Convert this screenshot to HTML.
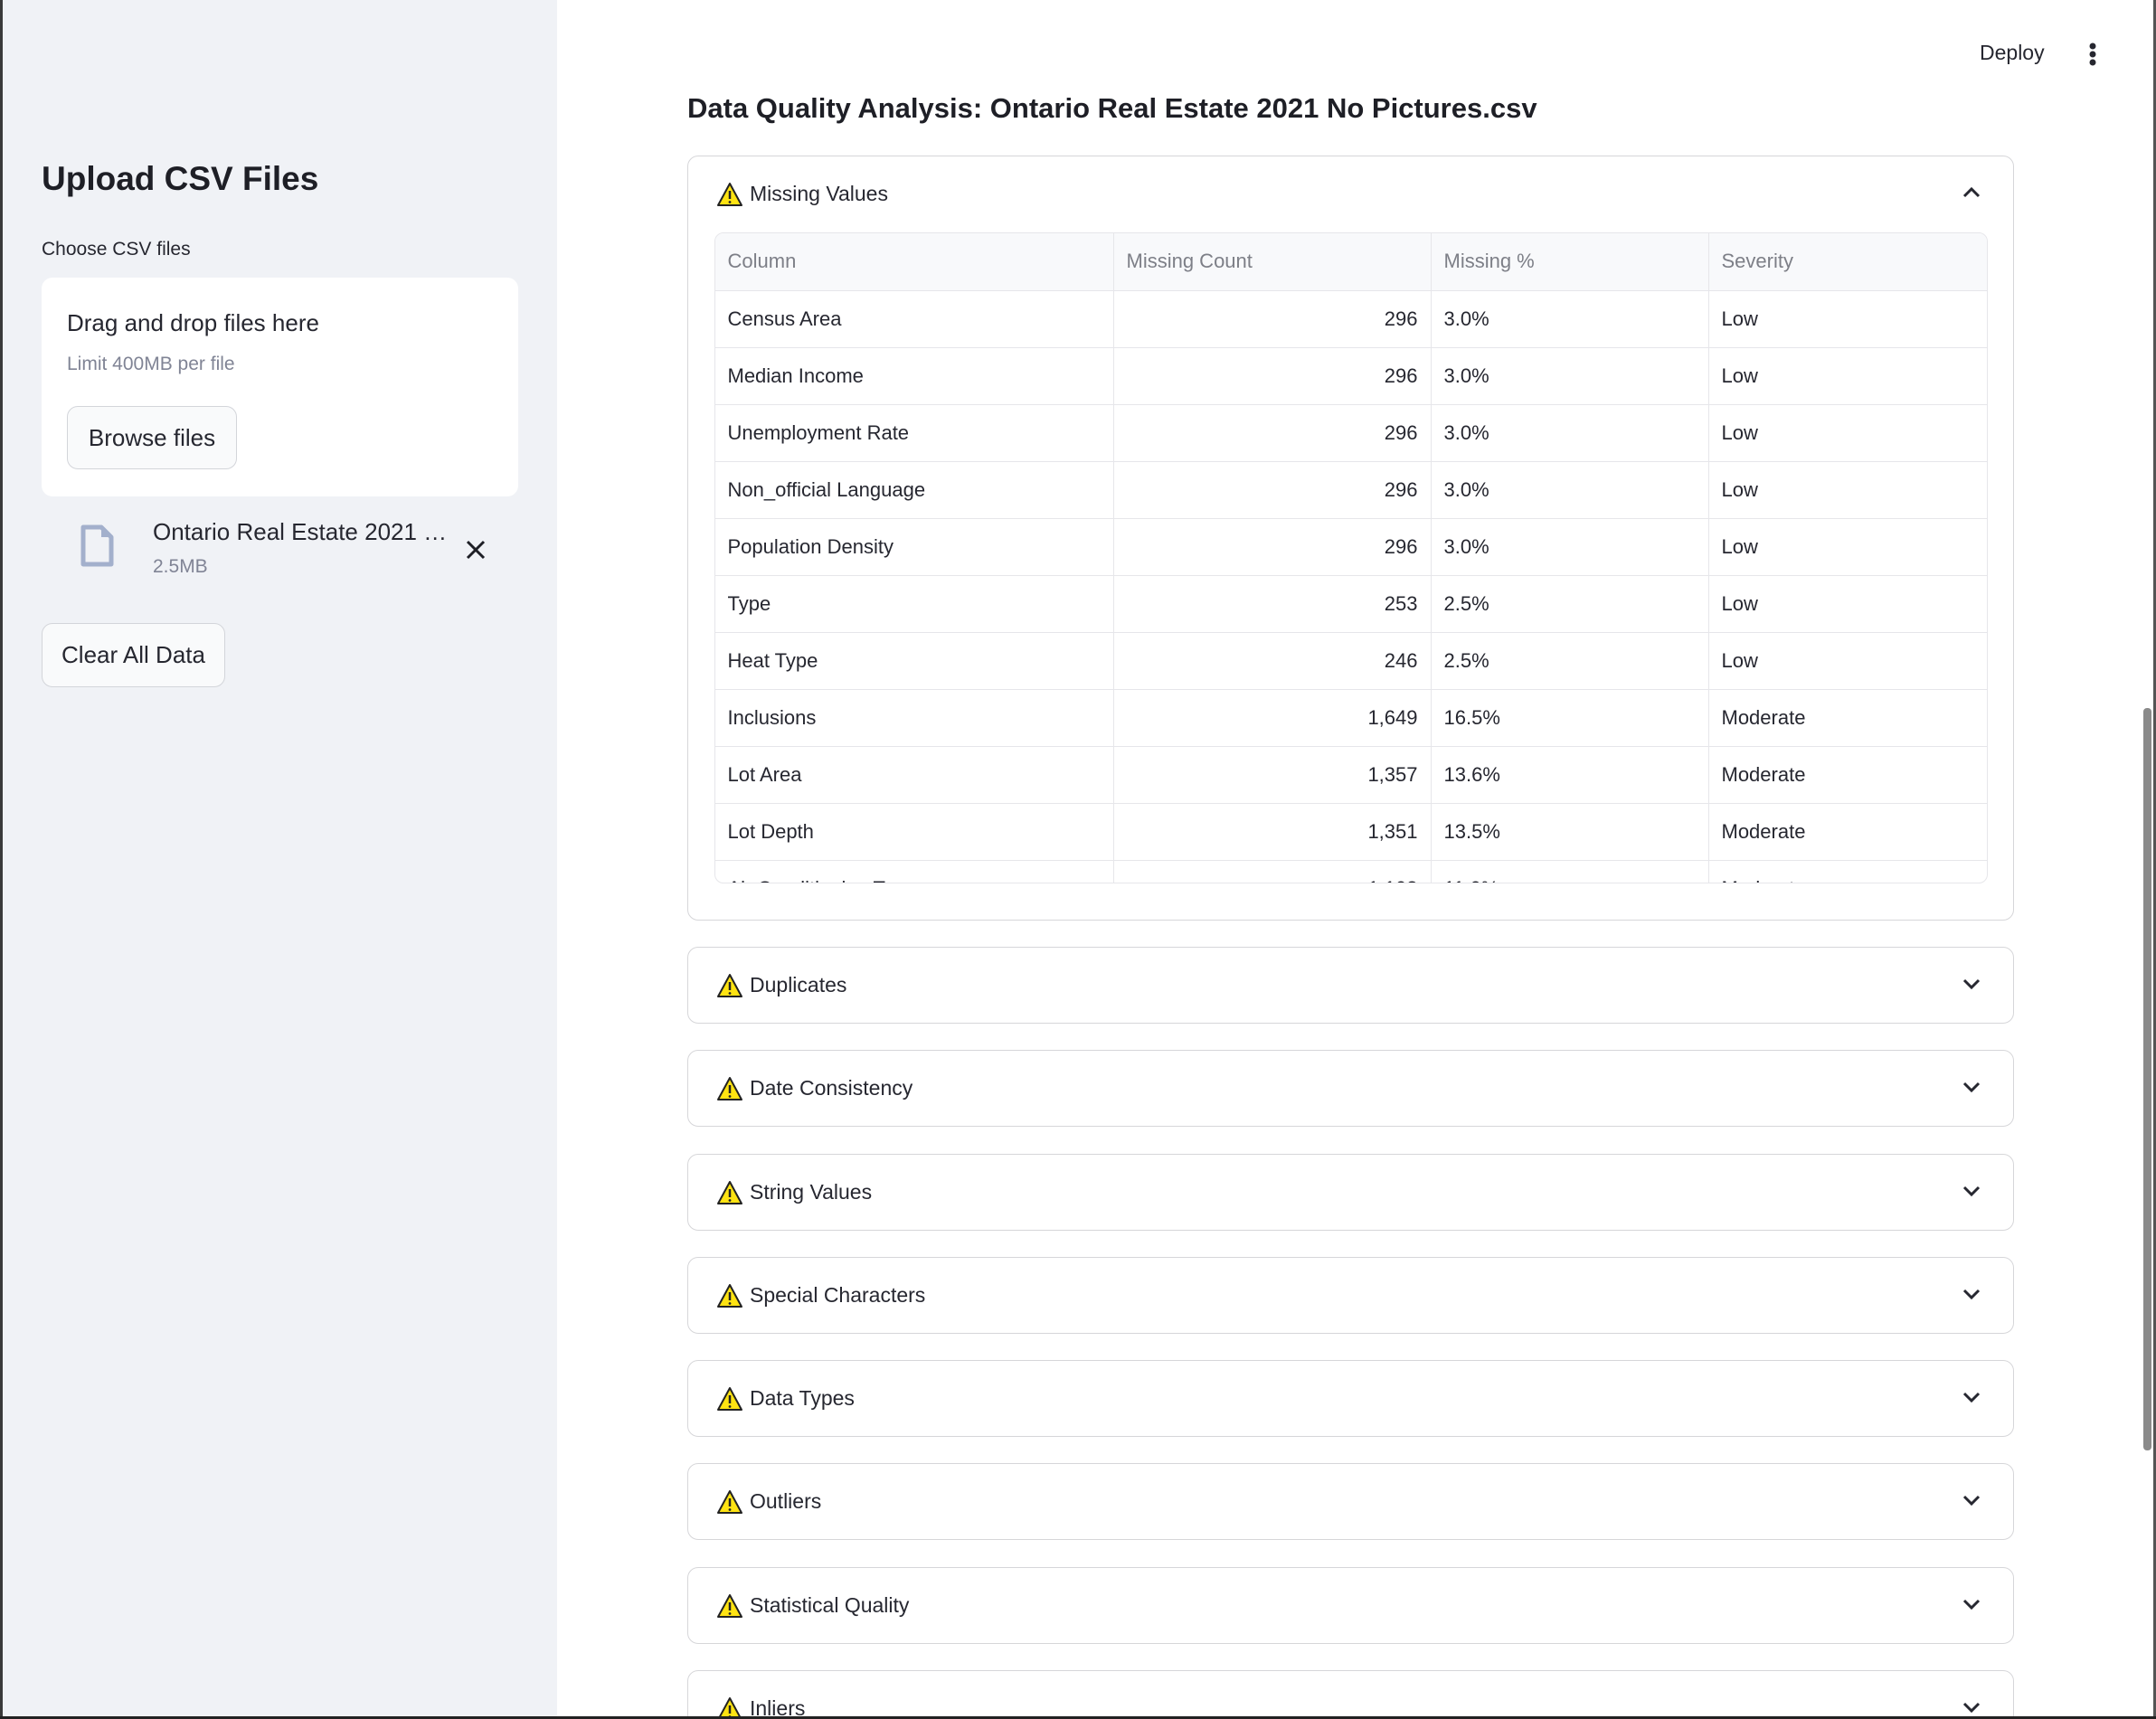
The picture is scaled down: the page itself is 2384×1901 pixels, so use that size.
<!DOCTYPE html>
<html style="width:2384px;height:1901px;overflow:hidden"><head><meta charset="utf-8"><style>
*{box-sizing:border-box;margin:0;padding:0}
body{width:2384px;height:1901px;overflow:hidden;background:#fff;font-family:"Liberation Sans",sans-serif;color:#262730;position:relative}
#wrap{position:absolute;left:0;top:0;width:2384px;height:1901px;overflow:hidden}
.abs{position:absolute}
#side{left:0;top:0;width:616px;height:1901px;background:#f0f2f6;border-left:3px solid #3a3a3a}
.t{position:absolute;white-space:nowrap}
.btn{position:absolute;background:#f9fafb;border:1.5px solid #d3d5da;border-radius:12px;display:flex;align-items:center;justify-content:center;font-size:26px;color:#262730}
.exp{position:absolute;left:760px;width:1467px;border:1.5px solid #d6d6d9;border-radius:12px;background:#fff}
.exp .lbl{position:absolute;left:68px;font-size:23px;color:#262730;white-space:nowrap}
.exp svg.w{position:absolute;left:31px}
.exp svg.c{position:absolute;left:1407px}
table{border-collapse:collapse;font-size:22px;color:#262730}
td,th{height:63px;border:1.5px solid #e6e6ea;padding:0 14px;font-weight:normal;text-align:left}
th{color:#7d7f87;background:#f8f9fb;height:64px}
td.n{text-align:right}
</style></head><body><div id="wrap">
<div id="side" class="abs"></div>
<div class="t" style="left:46px;top:177px;font-size:37px;font-weight:bold;color:#1e1f26">Upload CSV Files</div>
<div class="t" style="left:46px;top:264px;font-size:21px">Choose CSV files</div>
<div class="abs" style="left:46px;top:307px;width:527px;height:242px;background:#fff;border-radius:12px"></div>
<div class="t" style="left:74px;top:342px;font-size:26px">Drag and drop files here</div>
<div class="t" style="left:74px;top:391px;font-size:21px;color:#808495">Limit 400MB per file</div>
<div class="btn" style="left:74px;top:449px;width:188px;height:70px">Browse files</div>
<svg class="abs" style="left:88px;top:580px" width="38" height="48" viewBox="0 0 38 48"><path d="M4 3h20l11 11v30H4z" fill="none" stroke="#a3b0cc" stroke-width="5" stroke-linejoin="round"/><path d="M24 3v11h11" fill="#a3b0cc"/></svg>
<div class="t" style="left:169px;top:573px;font-size:26px">Ontario Real Estate 2021 …</div>
<div class="t" style="left:169px;top:615px;font-size:21px;color:#808495">2.5MB</div>
<svg class="abs" style="left:514px;top:596px" width="24" height="24" viewBox="0 0 24 24"><path d="M3 3L21 21M21 3L3 21" stroke="#1e1f26" stroke-width="3"/></svg>
<div class="btn" style="left:46px;top:689px;width:203px;height:71px">Clear All Data</div>

<div class="t" style="left:2189px;top:45px;font-size:23px">Deploy</div>
<svg class="abs" style="left:2306px;top:46px" width="16" height="28"><circle cx="8" cy="5" r="3.5" fill="#262730"/><circle cx="8" cy="14" r="3.5" fill="#262730"/><circle cx="8" cy="23" r="3.5" fill="#262730"/></svg>
<div class="t" style="left:760px;top:102px;font-size:31px;font-weight:bold;color:#1e1f26">Data Quality Analysis: Ontario Real Estate 2021 No Pictures.csv</div>

<div class="exp" style="top:172px;height:846px">
<svg class="w" style="top:28px" width="30" height="28" viewBox="0 0 30 28"><path d="M15 2L28 26H2z" fill="#ffe312" stroke="#222" stroke-width="2" stroke-linejoin="round"/><path d="M15 10v9" stroke="#222" stroke-width="2.5"/><circle cx="15" cy="22.5" r="1.4" fill="#222"/></svg>
<div class="lbl" style="top:28px">Missing Values</div>
<svg class="c" style="top:30px" width="24" height="20" viewBox="0 0 24 20"><path d="M4 14L12 6L20 14" fill="none" stroke="#262730" stroke-width="3"/></svg>
<div class="abs" style="left:29px;top:84px;width:1408px;height:720px;overflow:hidden;border:1.5px solid #e6e6ea;border-radius:10px">
<table style="width:1408px;margin:-1.5px">
<colgroup><col style="width:441px"><col style="width:351px"><col style="width:307px"><col></colgroup>
<tr><th>Column</th><th>Missing Count</th><th>Missing %</th><th>Severity</th></tr>
<tr><td>Census Area</td><td class="n">296</td><td>3.0%</td><td>Low</td></tr>
<tr><td>Median Income</td><td class="n">296</td><td>3.0%</td><td>Low</td></tr>
<tr><td>Unemployment Rate</td><td class="n">296</td><td>3.0%</td><td>Low</td></tr>
<tr><td>Non_official Language</td><td class="n">296</td><td>3.0%</td><td>Low</td></tr>
<tr><td>Population Density</td><td class="n">296</td><td>3.0%</td><td>Low</td></tr>
<tr><td>Type</td><td class="n">253</td><td>2.5%</td><td>Low</td></tr>
<tr><td>Heat Type</td><td class="n">246</td><td>2.5%</td><td>Low</td></tr>
<tr><td>Inclusions</td><td class="n">1,649</td><td>16.5%</td><td>Moderate</td></tr>
<tr><td>Lot Area</td><td class="n">1,357</td><td>13.6%</td><td>Moderate</td></tr>
<tr><td>Lot Depth</td><td class="n">1,351</td><td>13.5%</td><td>Moderate</td></tr>
<tr><td>Air Conditioning Type</td><td class="n">1,103</td><td>11.0%</td><td>Moderate</td></tr>
</table></div>
</div>

<div class="exp" style="top:1047px;height:85px"><svg class="w" style="top:28px" width="30" height="28" viewBox="0 0 30 28"><path d="M15 2L28 26H2z" fill="#ffe312" stroke="#222" stroke-width="2" stroke-linejoin="round"/><path d="M15 10v9" stroke="#222" stroke-width="2.5"/><circle cx="15" cy="22.5" r="1.4" fill="#222"/></svg><div class="lbl" style="top:28px">Duplicates</div><svg class="c" style="top:30px" width="24" height="20" viewBox="0 0 24 20"><path d="M4 6L12 14L20 6" fill="none" stroke="#262730" stroke-width="3"/></svg></div>
<div class="exp" style="top:1161px;height:85px"><svg class="w" style="top:28px" width="30" height="28" viewBox="0 0 30 28"><path d="M15 2L28 26H2z" fill="#ffe312" stroke="#222" stroke-width="2" stroke-linejoin="round"/><path d="M15 10v9" stroke="#222" stroke-width="2.5"/><circle cx="15" cy="22.5" r="1.4" fill="#222"/></svg><div class="lbl" style="top:28px">Date Consistency</div><svg class="c" style="top:30px" width="24" height="20" viewBox="0 0 24 20"><path d="M4 6L12 14L20 6" fill="none" stroke="#262730" stroke-width="3"/></svg></div>
<div class="exp" style="top:1276px;height:85px"><svg class="w" style="top:28px" width="30" height="28" viewBox="0 0 30 28"><path d="M15 2L28 26H2z" fill="#ffe312" stroke="#222" stroke-width="2" stroke-linejoin="round"/><path d="M15 10v9" stroke="#222" stroke-width="2.5"/><circle cx="15" cy="22.5" r="1.4" fill="#222"/></svg><div class="lbl" style="top:28px">String Values</div><svg class="c" style="top:30px" width="24" height="20" viewBox="0 0 24 20"><path d="M4 6L12 14L20 6" fill="none" stroke="#262730" stroke-width="3"/></svg></div>
<div class="exp" style="top:1390px;height:85px"><svg class="w" style="top:28px" width="30" height="28" viewBox="0 0 30 28"><path d="M15 2L28 26H2z" fill="#ffe312" stroke="#222" stroke-width="2" stroke-linejoin="round"/><path d="M15 10v9" stroke="#222" stroke-width="2.5"/><circle cx="15" cy="22.5" r="1.4" fill="#222"/></svg><div class="lbl" style="top:28px">Special Characters</div><svg class="c" style="top:30px" width="24" height="20" viewBox="0 0 24 20"><path d="M4 6L12 14L20 6" fill="none" stroke="#262730" stroke-width="3"/></svg></div>
<div class="exp" style="top:1504px;height:85px"><svg class="w" style="top:28px" width="30" height="28" viewBox="0 0 30 28"><path d="M15 2L28 26H2z" fill="#ffe312" stroke="#222" stroke-width="2" stroke-linejoin="round"/><path d="M15 10v9" stroke="#222" stroke-width="2.5"/><circle cx="15" cy="22.5" r="1.4" fill="#222"/></svg><div class="lbl" style="top:28px">Data Types</div><svg class="c" style="top:30px" width="24" height="20" viewBox="0 0 24 20"><path d="M4 6L12 14L20 6" fill="none" stroke="#262730" stroke-width="3"/></svg></div>
<div class="exp" style="top:1618px;height:85px"><svg class="w" style="top:28px" width="30" height="28" viewBox="0 0 30 28"><path d="M15 2L28 26H2z" fill="#ffe312" stroke="#222" stroke-width="2" stroke-linejoin="round"/><path d="M15 10v9" stroke="#222" stroke-width="2.5"/><circle cx="15" cy="22.5" r="1.4" fill="#222"/></svg><div class="lbl" style="top:28px">Outliers</div><svg class="c" style="top:30px" width="24" height="20" viewBox="0 0 24 20"><path d="M4 6L12 14L20 6" fill="none" stroke="#262730" stroke-width="3"/></svg></div>
<div class="exp" style="top:1733px;height:85px"><svg class="w" style="top:28px" width="30" height="28" viewBox="0 0 30 28"><path d="M15 2L28 26H2z" fill="#ffe312" stroke="#222" stroke-width="2" stroke-linejoin="round"/><path d="M15 10v9" stroke="#222" stroke-width="2.5"/><circle cx="15" cy="22.5" r="1.4" fill="#222"/></svg><div class="lbl" style="top:28px">Statistical Quality</div><svg class="c" style="top:30px" width="24" height="20" viewBox="0 0 24 20"><path d="M4 6L12 14L20 6" fill="none" stroke="#262730" stroke-width="3"/></svg></div>
<div class="exp" style="top:1847px;height:85px"><svg class="w" style="top:28px" width="30" height="28" viewBox="0 0 30 28"><path d="M15 2L28 26H2z" fill="#ffe312" stroke="#222" stroke-width="2" stroke-linejoin="round"/><path d="M15 10v9" stroke="#222" stroke-width="2.5"/><circle cx="15" cy="22.5" r="1.4" fill="#222"/></svg><div class="lbl" style="top:28px">Inliers</div><svg class="c" style="top:30px" width="24" height="20" viewBox="0 0 24 20"><path d="M4 6L12 14L20 6" fill="none" stroke="#262730" stroke-width="3"/></svg></div>

<div class="abs" style="left:2370px;top:783px;width:9px;height:821px;background:#8a8a8a;border-radius:4px"></div>
<div class="abs" style="left:2381px;top:0;width:3px;height:1901px;background:#555"></div>
<div class="abs" style="left:0;top:1898px;width:2384px;height:3px;background:#222"></div>
</div></body></html>
